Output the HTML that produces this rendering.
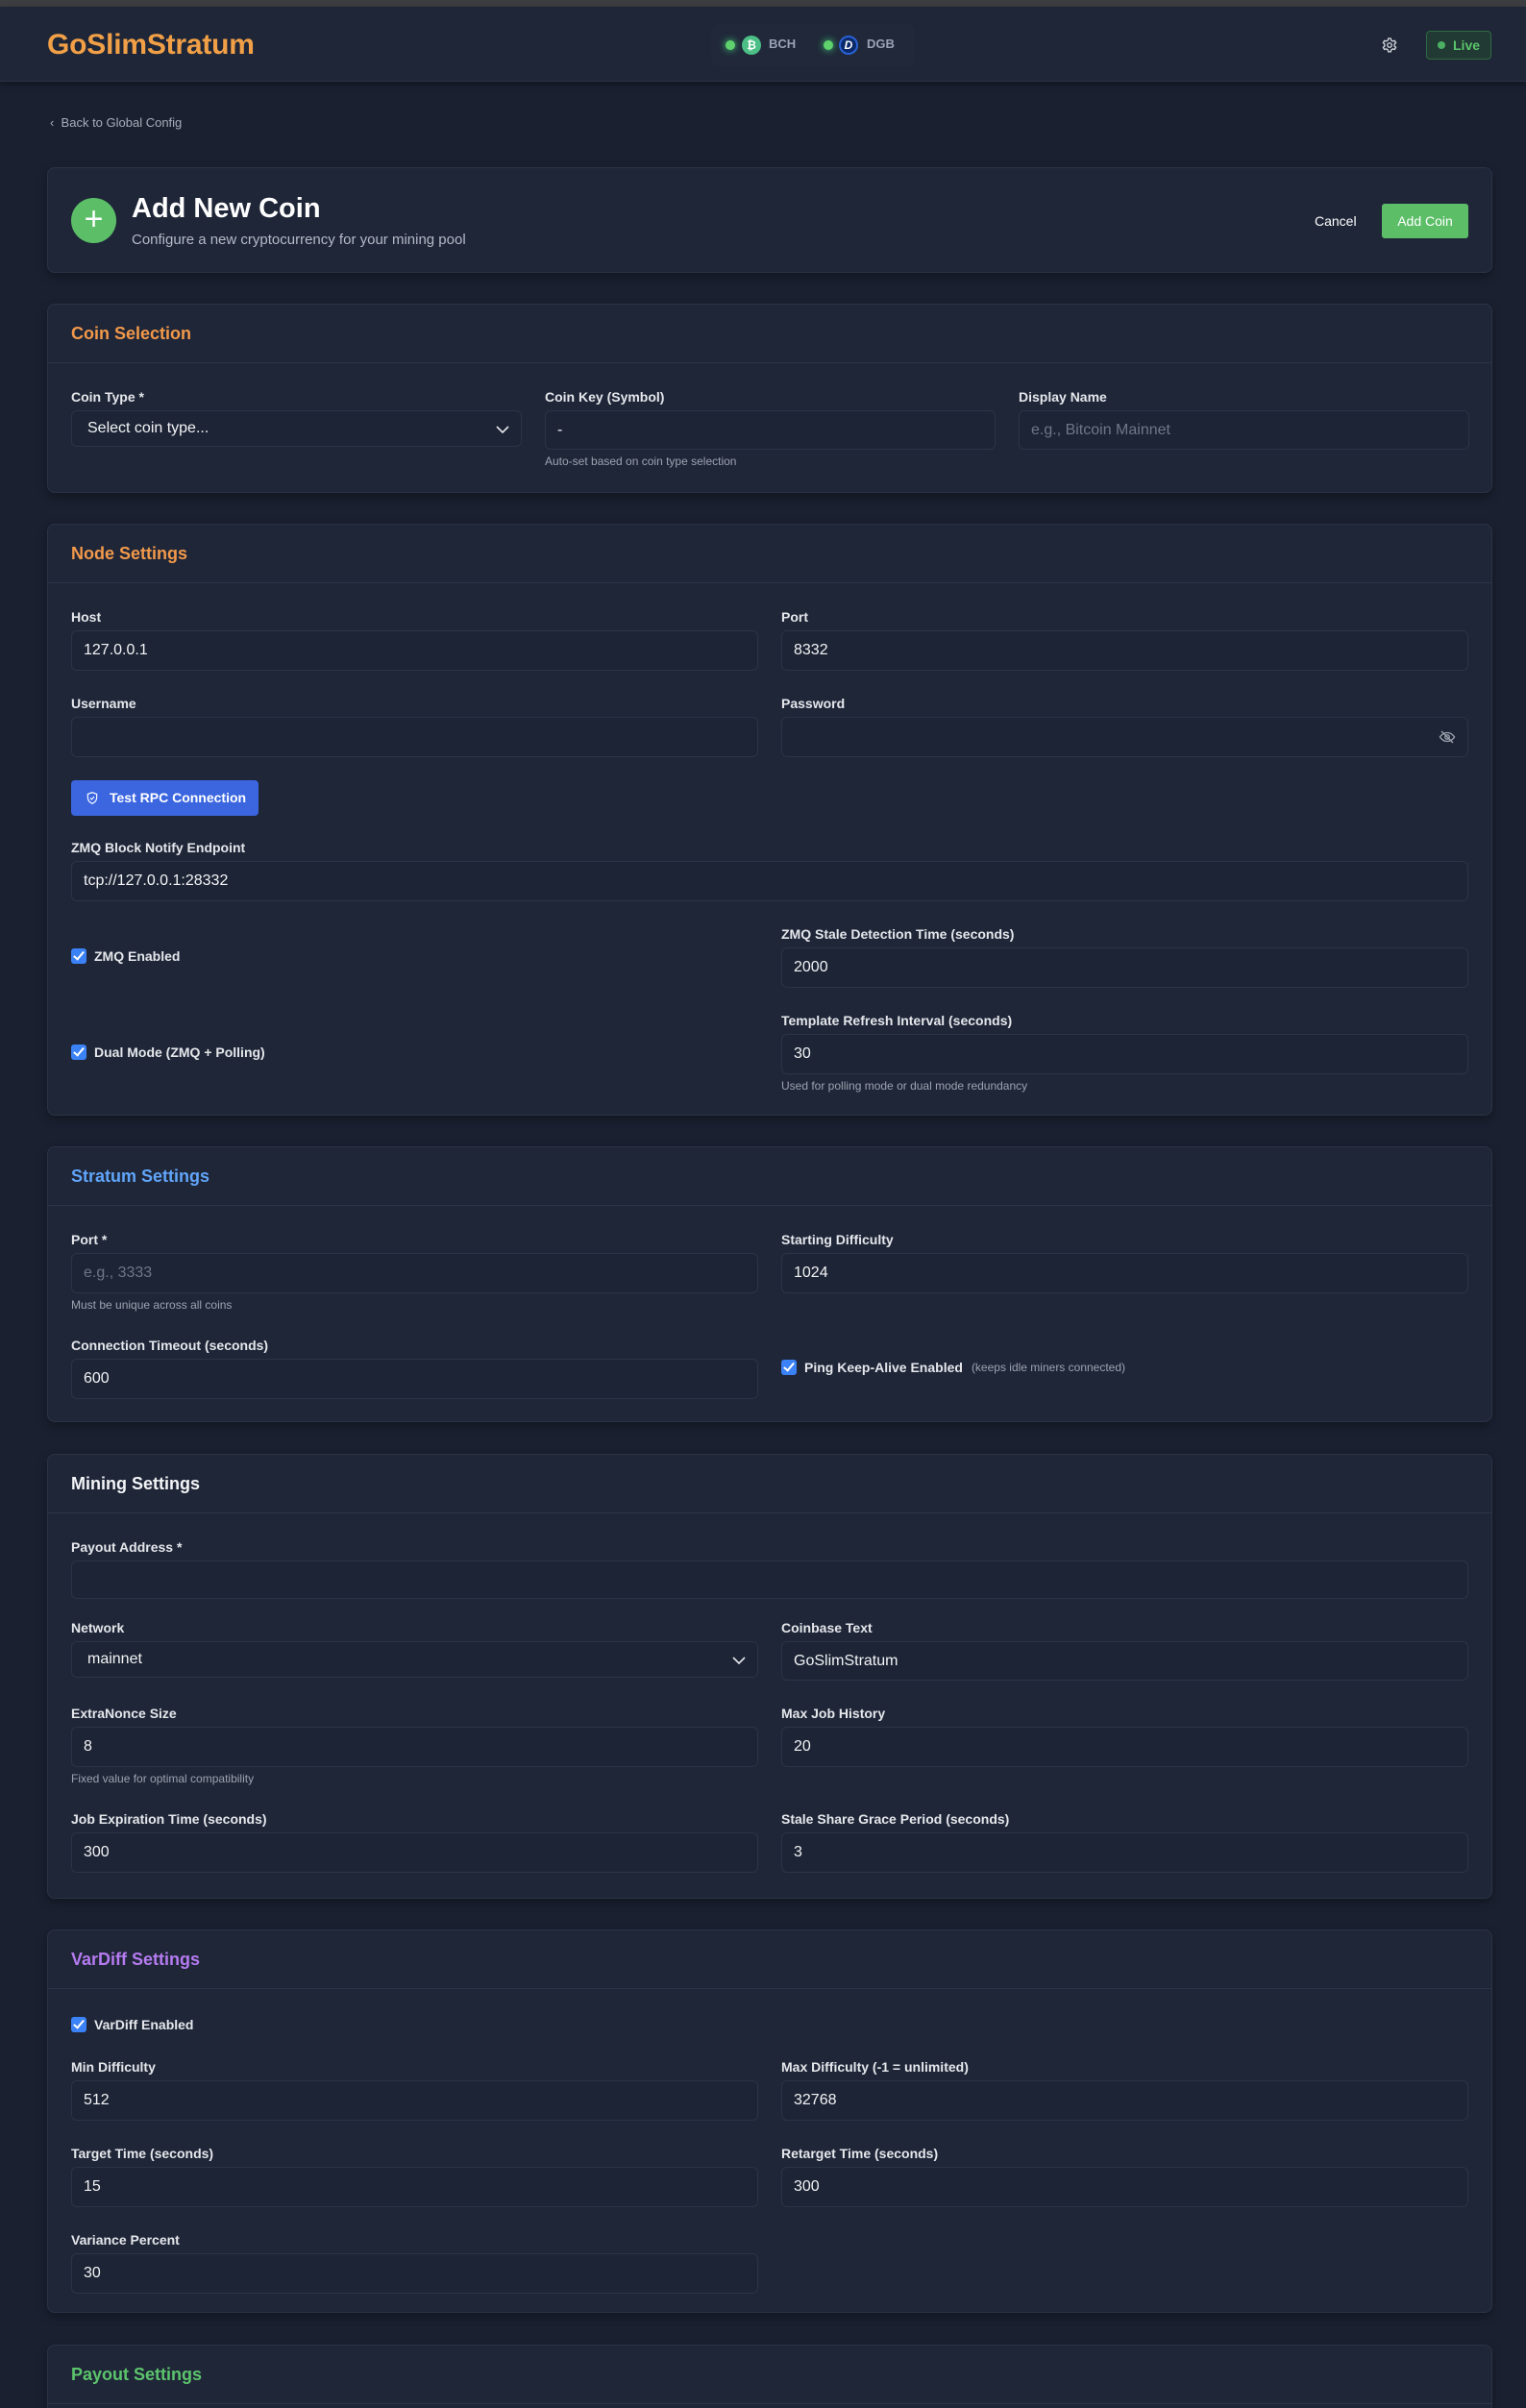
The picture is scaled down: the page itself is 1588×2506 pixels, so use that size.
<!DOCTYPE html>
<html><head><meta charset="utf-8">
<style>
*{box-sizing:border-box;margin:0;padding:0}
html,body{width:1588px;height:2506px;overflow:hidden}
body{background:#1a2030;font-family:"Liberation Sans",sans-serif;color:#e5e7eb;position:relative}
.strip{position:absolute;left:0;top:0;width:1588px;height:7px;background:#3b3d40}
.hdr{position:absolute;left:0;top:7px;width:1588px;height:78px;background:#1f2637;border-bottom:1px solid #2c3446;box-shadow:0 3px 6px rgba(0,0,0,.35)}
.logo{position:absolute;left:49px;top:23px;font-size:30px;font-weight:bold;color:#f2a047;letter-spacing:-0.2px}
.pills{position:absolute;left:740px;top:18px;width:212px;height:44px;background:#202839;border-radius:8px}
.dot{position:absolute;width:10px;height:10px;border-radius:50%;background:#5fd16d;box-shadow:0 0 8px #4ade80}
.ci{position:absolute;width:20px;height:20px;border-radius:50%;font-size:12px;font-weight:bold;color:#fff;text-align:center;line-height:20px}
.pt{position:absolute;font-size:13px;font-weight:bold;color:#9aa3b5;top:40px}
.live{position:absolute;left:1484px;top:32px;width:68px;height:30px;border:1px solid #2f6b43;background:#213a33;border-radius:4px;color:#5cc46c;font-size:14px;font-weight:bold;line-height:28px;padding-left:27px}
.live:before{content:"";position:absolute;left:11px;top:10px;width:8px;height:8px;border-radius:50%;background:#4caf63}
.back{position:absolute;left:52px;top:120px;font-size:13px;color:#a6adba}
.card{position:absolute;left:49px;width:1504px;background:#1f2638;border:1px solid #2a3345;border-radius:8px;box-shadow:0 4px 10px rgba(0,0,0,.3)}
.ch{height:61px;border-bottom:1px solid #2c3547;padding-left:24px;font-size:18px;font-weight:bold;line-height:60px}
.cb{padding:25px 24px 24px}
.g{display:grid;grid-template-columns:715px 715px;column-gap:24px}
.g3{display:grid;grid-template-columns:469px 469px 469px;column-gap:24px}
.f{margin-bottom:24px}
.f.l{margin-bottom:0}
label.lb{display:block;font-size:14px;font-weight:bold;line-height:20px;margin-bottom:4px;color:#e5e7eb}
.in{height:42px;background:#1d2435;border:1px solid #2b3446;border-radius:6px;font-size:16px;line-height:40px;padding-left:12px;color:#f3f4f6;position:relative}
.in.ph{color:#6f7787}
.sel{height:38px;line-height:36px;padding-left:16px}
.sel svg{position:absolute;right:10px;top:10px}
.hp{font-size:12px;color:#9ca3af;line-height:16px;margin-top:4px}
.ck{display:flex;align-items:center;font-size:14px;font-weight:bold;color:#e5e7eb}
.ck i{display:inline-block;width:16px;height:16px;background:#3b82f6;border-radius:3px;margin-right:8px;position:relative}
.ck i:after{content:"";position:absolute;left:5px;top:1px;width:4px;height:9px;border:solid #fff;border-width:0 2.5px 2.5px 0;transform:rotate(40deg)}
</style></head><body>
<div class="strip"></div>
<div class="hdr">
 <div class="logo">GoSlimStratum</div>
 <div class="pills"></div>
 <div class="dot" style="left:755px;top:35px"></div>
 <div class="ci" style="left:772px;top:30px;background:#4bbf85">₿</div>
 <div class="pt" style="left:800px;top:31px">BCH</div>
 <div class="dot" style="left:857px;top:35px"></div>
 <div class="ci" style="left:873px;top:30px;background:#0b2a6b;border:2px solid #2a62d4;line-height:16px;font-style:italic">D</div>
 <div class="pt" style="left:902px;top:31px">DGB</div>
 <svg style="position:absolute;left:1437px;top:31px" width="18" height="18" viewBox="0 0 24 24" fill="none" stroke="#d1d5db" stroke-width="1.8"><path d="M10.3 2.7h3.4l.6 2.6 2.2 1.3 2.6-.8 1.7 2.9-2 1.9v2.6l2 1.9-1.7 2.9-2.6-.8-2.2 1.3-.6 2.6h-3.4l-.6-2.6-2.2-1.3-2.6.8-1.7-2.9 2-1.9v-2.6l-2-1.9 1.7-2.9 2.6.8 2.2-1.3z"/><circle cx="12" cy="12" r="3"/></svg>
 <div class="live" style="top:25px">Live</div>
</div>
<div class="back">&lsaquo;&nbsp; Back to Global Config</div>

<div class="card" style="top:174px;height:110px">
 <div style="position:absolute;left:24px;top:31px;width:47px;height:47px;border-radius:50%;background:#5cbf68;color:#fff;font-size:34px;line-height:44px;text-align:center;font-weight:300">+</div>
 <div style="position:absolute;left:87px;top:26px;font-size:29px;font-weight:bold;color:#fff">Add New Coin</div>
 <div style="position:absolute;left:87px;top:66px;font-size:15px;color:#b4bac6">Configure a new cryptocurrency for your mining pool</div>
 <div style="position:absolute;left:1318px;top:47px;font-size:14px;color:#fff">Cancel</div>
 <div style="position:absolute;left:1388px;top:37px;width:90px;height:36px;background:#5cbf68;border-radius:3px;color:#fff;font-size:14px;line-height:36px;text-align:center">Add Coin</div>
</div>

<div class="card" style="top:316px;height:197px">
 <div class="ch" style="color:#f2994a">Coin Selection</div>
 <div class="cb"><div class="g3">
  <div><label class="lb">Coin Type *</label><div class="in sel">Select coin type...<svg width="18" height="18" viewBox="0 0 18 18" fill="none" stroke="#e5e7eb" stroke-width="1.6"><path d="M3 6l6 6 6-6"/></svg></div></div>
  <div><label class="lb">Coin Key (Symbol)</label><div class="in" style="height:41px">-</div><div class="hp">Auto-set based on coin type selection</div></div>
  <div><label class="lb">Display Name</label><div class="in ph" style="height:41px">e.g., Bitcoin Mainnet</div></div>
 </div></div>
</div>

<div class="card" style="top:545px;height:616px">
 <div class="ch" style="color:#f2994a">Node Settings</div>
 <div class="cb">
  <div class="g">
   <div class="f"><label class="lb">Host</label><div class="in">127.0.0.1</div></div>
   <div class="f"><label class="lb">Port</label><div class="in">8332</div></div>
   <div class="f l"><label class="lb">Username</label><div class="in"></div></div>
   <div class="f l"><label class="lb">Password</label><div class="in"><svg style="position:absolute;right:12px;top:11px" width="18" height="18" viewBox="0 0 24 24" fill="none" stroke="#9ca3af" stroke-width="1.8"><path d="M2 12s3.5-6 10-6 10 6 10 6-3.5 6-10 6S2 12 2 12z"/><circle cx="12" cy="12" r="3"/><path d="M4 4l16 16"/></svg></div></div>
  </div>
  <div style="margin-top:24px;width:195px;height:37px;background:#3b66e0;border-radius:4px;color:#fff;font-size:14px;font-weight:bold;line-height:37px;padding-left:40px;position:relative"><svg style="position:absolute;left:15px;top:11px" width="14" height="15" viewBox="0 0 24 24" fill="none" stroke="#fff" stroke-width="2"><path d="M12 2l8 3v6c0 5-3.5 9-8 11-4.5-2-8-6-8-11V5z"/><path d="M8.5 12l2.5 2.5 4.5-5"/></svg>Test RPC Connection</div>
  <div style="margin-top:23px"><label class="lb">ZMQ Block Notify Endpoint</label><div class="in">tcp://127.0.0.1:28332</div></div>
  <div class="g" style="margin-top:24px">
   <div class="ck" style="margin-bottom:24px"><i></i>ZMQ Enabled</div>
   <div class="f"><label class="lb">ZMQ Stale Detection Time (seconds)</label><div class="in">2000</div></div>
   <div class="ck"><i></i>Dual Mode (ZMQ + Polling)</div>
   <div class="f l"><label class="lb">Template Refresh Interval (seconds)</label><div class="in">30</div><div class="hp">Used for polling mode or dual mode redundancy</div></div>
  </div>
 </div>
</div>

<div class="card" style="top:1193px;height:287px">
 <div class="ch" style="color:#60a5fa">Stratum Settings</div>
 <div class="cb"><div class="g">
  <div class="f"><label class="lb">Port *</label><div class="in ph">e.g., 3333</div><div class="hp">Must be unique across all coins</div></div>
  <div class="f"><label class="lb">Starting Difficulty</label><div class="in">1024</div></div>
  <div class="f l"><label class="lb">Connection Timeout (seconds)</label><div class="in">600</div></div>
  <div class="ck"><i></i>Ping Keep-Alive Enabled<span style="font-weight:normal;font-size:12px;color:#9ca3af;margin-left:9px">(keeps idle miners connected)</span></div>
 </div></div>
</div>

<div class="card" style="top:1513px;height:463px">
 <div class="ch" style="color:#f3f4f6">Mining Settings</div>
 <div class="cb">
  <div class="f" style="margin-bottom:20px"><label class="lb">Payout Address *</label><div class="in" style="height:40px"></div></div>
  <div class="g">
   <div class="f"><label class="lb">Network</label><div class="in sel">mainnet<svg width="18" height="18" viewBox="0 0 18 18" fill="none" stroke="#e5e7eb" stroke-width="1.6"><path d="M3 6l6 6 6-6"/></svg></div></div>
   <div class="f"><label class="lb">Coinbase Text</label><div class="in" style="height:41px">GoSlimStratum</div></div>
   <div class="f"><label class="lb">ExtraNonce Size</label><div class="in">8</div><div class="hp">Fixed value for optimal compatibility</div></div>
   <div class="f"><label class="lb">Max Job History</label><div class="in">20</div></div>
   <div class="f l"><label class="lb">Job Expiration Time (seconds)</label><div class="in">300</div></div>
   <div class="f l"><label class="lb">Stale Share Grace Period (seconds)</label><div class="in">3</div></div>
  </div>
 </div>
</div>

<div class="card" style="top:2008px;height:399px">
 <div class="ch" style="color:#b57bf0">VarDiff Settings</div>
 <div class="cb">
  <div class="ck" style="height:20px;margin-bottom:24px;margin-top:2px"><i></i>VarDiff Enabled</div>
  <div class="g">
   <div class="f"><label class="lb">Min Difficulty</label><div class="in">512</div></div>
   <div class="f"><label class="lb">Max Difficulty (-1 = unlimited)</label><div class="in">32768</div></div>
   <div class="f"><label class="lb">Target Time (seconds)</label><div class="in">15</div></div>
   <div class="f"><label class="lb">Retarget Time (seconds)</label><div class="in">300</div></div>
   <div class="f l"><label class="lb">Variance Percent</label><div class="in">30</div></div>
  </div>
 </div>
</div>

<div class="card" style="top:2440px;height:120px">
 <div class="ch" style="color:#5cc46c">Payout Settings</div>
</div>
</body></html>
